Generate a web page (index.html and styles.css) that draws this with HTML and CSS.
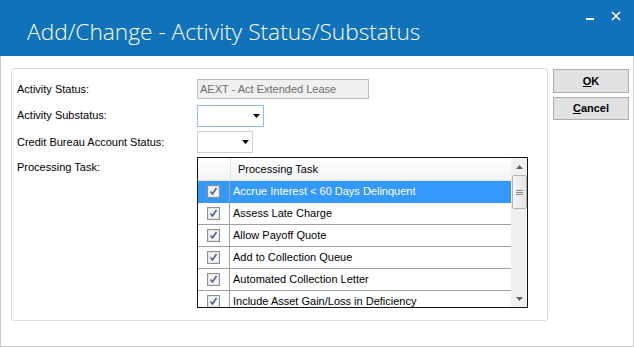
FILE: index.html
```html
<!DOCTYPE html>
<html>
<head>
<meta charset="utf-8">
<link rel="stylesheet" href="styles.css">
</head>
<body>
<div class="window">
  <div class="titlebar">
    <div class="title">Add/Change - Activity Status/Substatus</div>
    <div class="winctrls">
      <svg class="minbtn" width="9" height="9" viewBox="0 0 9 9"><rect x="0" y="7" width="8" height="2" fill="#fff"/></svg>
      <svg class="closebtn" width="10" height="10" viewBox="0 0 10 10"><path d="M1 1 L9 9 M9 1 L1 9" stroke="#fff" stroke-width="1.7" fill="none"/></svg>
    </div>
  </div>
  <div class="content">
    <div class="groupbox">
      <div class="form">
        <div class="label">Activity Status:</div>
        <div class="textbox">AEXT - Act Extended Lease</div>
        <div class="label">Activity Substatus:</div>
        <div class="combo combo-sub"><svg class="arrow" width="7" height="4" viewBox="0 0 7 4"><path d="M0 0 H7 L3.5 4 Z" fill="#000"/></svg></div>
        <div class="label">Credit Bureau Account Status:</div>
        <div class="combo combo-cb"><svg class="arrow" width="7" height="4" viewBox="0 0 7 4"><path d="M0 0 H7 L3.5 4 Z" fill="#000"/></svg></div>
        <div class="label label-top">Processing Task:</div>
        <div class="listview">
          <div class="lv-main">
            <div class="lv-header">
              <div class="hcell hcheck"></div>
              <div class="hcell htext">Processing Task</div>
            </div>
            <div class="lv-row selected"><div class="ccell"><svg class="cb" width="13" height="13" viewBox="0 0 13 13"><rect x="0.5" y="0.5" width="12" height="12" fill="#e6e6e6" stroke="#8f8f8f"/><rect x="2" y="2" width="9" height="9" fill="#f4f4f4"/><path d="M3.5 6.5 L5.5 9 L9.5 3" stroke="#4d5f99" stroke-width="1.6" fill="none"/></svg></div><div class="tcell">Accrue Interest &lt; 60 Days Delinquent</div></div>
            <div class="lv-row"><div class="ccell"><svg class="cb" width="13" height="13" viewBox="0 0 13 13"><rect x="0.5" y="0.5" width="12" height="12" fill="#e6e6e6" stroke="#8f8f8f"/><rect x="2" y="2" width="9" height="9" fill="#f4f4f4"/><path d="M3.5 6.5 L5.5 9 L9.5 3" stroke="#4d5f99" stroke-width="1.6" fill="none"/></svg></div><div class="tcell">Assess Late Charge</div></div>
            <div class="lv-row"><div class="ccell"><svg class="cb" width="13" height="13" viewBox="0 0 13 13"><rect x="0.5" y="0.5" width="12" height="12" fill="#e6e6e6" stroke="#8f8f8f"/><rect x="2" y="2" width="9" height="9" fill="#f4f4f4"/><path d="M3.5 6.5 L5.5 9 L9.5 3" stroke="#4d5f99" stroke-width="1.6" fill="none"/></svg></div><div class="tcell">Allow Payoff Quote</div></div>
            <div class="lv-row"><div class="ccell"><svg class="cb" width="13" height="13" viewBox="0 0 13 13"><rect x="0.5" y="0.5" width="12" height="12" fill="#e6e6e6" stroke="#8f8f8f"/><rect x="2" y="2" width="9" height="9" fill="#f4f4f4"/><path d="M3.5 6.5 L5.5 9 L9.5 3" stroke="#4d5f99" stroke-width="1.6" fill="none"/></svg></div><div class="tcell">Add to Collection Queue</div></div>
            <div class="lv-row"><div class="ccell"><svg class="cb" width="13" height="13" viewBox="0 0 13 13"><rect x="0.5" y="0.5" width="12" height="12" fill="#e6e6e6" stroke="#8f8f8f"/><rect x="2" y="2" width="9" height="9" fill="#f4f4f4"/><path d="M3.5 6.5 L5.5 9 L9.5 3" stroke="#4d5f99" stroke-width="1.6" fill="none"/></svg></div><div class="tcell">Automated Collection Letter</div></div>
            <div class="lv-row"><div class="ccell"><svg class="cb" width="13" height="13" viewBox="0 0 13 13"><rect x="0.5" y="0.5" width="12" height="12" fill="#e6e6e6" stroke="#8f8f8f"/><rect x="2" y="2" width="9" height="9" fill="#f4f4f4"/><path d="M3.5 6.5 L5.5 9 L9.5 3" stroke="#4d5f99" stroke-width="1.6" fill="none"/></svg></div><div class="tcell">Include Asset Gain/Loss in Deficiency</div></div>
          </div>
          <div class="scrollbar">
            <div class="sb-arrow"><svg width="7" height="4" viewBox="0 0 7 4"><path d="M0 4 H7 L3.5 0 Z" fill="#606060"/></svg></div>
            <div class="sb-thumb"><div class="grip"></div><div class="grip"></div><div class="grip"></div></div>
            <div class="sb-track"></div>
            <div class="sb-arrow"><svg width="7" height="4" viewBox="0 0 7 4"><path d="M0 0 H7 L3.5 4 Z" fill="#606060"/></svg></div>
          </div>
        </div>
      </div>
    </div>
    <div class="buttons">
      <div class="btn"><u>O</u>K</div>
      <div class="btn btn-cancel"><u>C</u>ancel</div>
    </div>
  </div>
</div>
</body>
</html>
```

FILE: styles.css
```css
html, body {
  margin: 0;
  padding: 0;
  background: #fff;
}
.window {
  width: 634px;
  height: 347px;
  box-sizing: border-box;
  display: flex;
  flex-direction: column;
  font-family: "Liberation Sans", Arial, sans-serif;
  font-size: 11px;
  color: #000;
}
.titlebar {
  height: 56px;
  flex: none;
  background: #1072bb;
  display: flex;
  justify-content: space-between;
  align-items: flex-start;
}
.title {
  font-family: "Open Sans", sans-serif;
  font-weight: 300;
  font-size: 22.7px;
  line-height: 32px;
  color: #fff;
  padding: 16px 0 0 27px;
  white-space: nowrap;
}
.winctrls {
  display: flex;
  gap: 16px;
  padding: 11px 13px 0 0;
}
.content {
  flex: 1;
  display: flex;
  align-items: flex-start;
  gap: 5px;
  padding: 12px 0 0 10px;
  border-left: 1px solid #c9c9c9;
  border-right: 1px solid #c9c9c9;
  border-bottom: 1px solid #c9c9c9;
}
.groupbox {
  width: 537px;
  height: 253px;
  box-sizing: border-box;
  border: 1px solid #d3dde5;
  border-radius: 3px;
  padding: 10px 0 0 5px;
}
.form {
  display: grid;
  grid-template-columns: 180px auto;
  row-gap: 4px;
  align-items: center;
  justify-items: start;
}
.label {
  white-space: nowrap;
  line-height: 13px;
}
.label-top {
  align-self: start;
  padding-top: 4px;
}
.textbox {
  width: 172px;
  height: 20px;
  box-sizing: border-box;
  border: 1px solid #bcbcbc;
  background: #f0f0f0;
  color: #6d6d6d;
  padding-left: 2px;
  line-height: 18px;
  white-space: nowrap;
}
.combo {
  height: 22px;
  box-sizing: border-box;
  border: 1px solid #d0d0d0;
  background: #fff;
  display: flex;
  align-items: center;
  justify-content: flex-end;
  padding-right: 3px;
}
.combo-sub {
  width: 67px;
  margin-top: 2px;
  border-color: #8ebce8;
}
.combo-cb {
  width: 56px;
}
.listview {
  width: 331px;
  height: 151px;
  box-sizing: border-box;
  border: 1px solid #141414;
  display: flex;
  overflow: hidden;
}
.lv-main {
  flex: 1;
  overflow: hidden;
}
.lv-header {
  height: 22px;
  display: flex;
  background: linear-gradient(#ffffff, #f2f4f7);
  border-bottom: 1px solid #e4e6ea;
}
.hcell {
  line-height: 22px;
  white-space: nowrap;
}
.hcheck {
  width: 32px;
  border-right: 1px solid #dfe2e6;
}
.htext {
  padding-left: 7px;
}
.lv-row {
  height: 21px;
  display: flex;
  border-bottom: 1px solid #a0a0a0;
}
.lv-row.selected {
  background: #3399ff;
  border-bottom-color: #3399ff;
  color: #fff;
}
.ccell {
  width: 32px;
  flex: none;
  border-right: 1px solid #a0a0a0;
  display: flex;
  align-items: center;
  padding-left: 9px;
  box-sizing: border-box;
}
.tcell {
  padding-left: 3px;
  line-height: 21px;
  white-space: nowrap;
}
.scrollbar {
  width: 16px;
  flex: none;
  background: #f0f0f0;
  display: flex;
  flex-direction: column;
  align-items: center;
}
.sb-arrow {
  height: 17px;
  width: 16px;
  display: flex;
  align-items: center;
  justify-content: center;
  flex: none;
}
.sb-thumb {
  width: 15px;
  height: 34px;
  box-sizing: border-box;
  margin-left: 1px;
  border: 1px solid #b3b3b3;
  border-radius: 2px;
  background: linear-gradient(90deg, #f6f6f6, #e4e4e4);
  display: flex;
  flex-direction: column;
  justify-content: center;
  align-items: center;
  gap: 1px;
  flex: none;
}
.grip {
  width: 7px;
  height: 1px;
  background: #8a8a8a;
}
.sb-track {
  flex: 1;
}
.buttons {
  display: flex;
  flex-direction: column;
  gap: 4px;
  padding-top: 1px;
}
.btn {
  width: 76px;
  height: 24px;
  box-sizing: border-box;
  border: 1px solid #adadad;
  background: #e1e1e1;
  font-weight: bold;
  text-align: center;
  line-height: 22px;
}
.btn-cancel {
  height: 23px;
  line-height: 21px;
}
```
